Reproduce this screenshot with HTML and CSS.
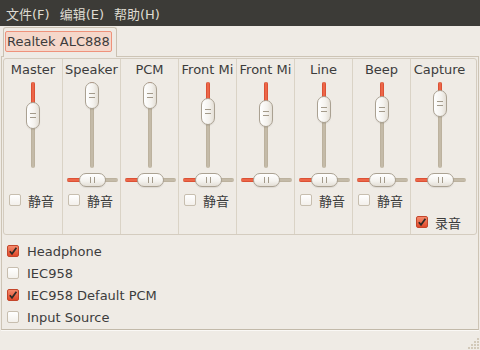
FILE: index.html
```html
<!DOCTYPE html>
<html>
<head>
    <title>Mixer</title>
    <link rel="stylesheet" href="styles.css">
</head>
<body>
    <div class="menubar">
        <span>文件(F)</span>
        <span>编辑(E)</span>
        <span>帮助(H)</span>
    </div>

    <div class="notebook">
        <div class="tabs">
            <div class="tab"><span class="tab-label">Realtek ALC888</span></div>
        </div>
        <div class="page">
            <div class="frame">
                <!-- one column per mixer track -->
                <div class="channel">
                    <div class="ch-name">Master</div>
                    <div class="vscale"><div class="trough"></div><div class="fill" style="height:24px"></div><div class="thumb" style="top:20px"></div></div>
                    <div class="hscale empty"></div>
                    <div class="check"><span class="box"></span>静音</div>
                </div>
                <div class="channel">
                    <div class="ch-name">Speaker</div>
                    <div class="vscale"><div class="trough"></div><div class="fill" style="height:4px"></div><div class="thumb" style="top:0px"></div></div>
                    <div class="hscale"><div class="trough"></div><div class="fill" style="width:14px"></div><div class="thumb" style="left:12px"></div></div>
                    <div class="check"><span class="box"></span>静音</div>
                </div>
                <div class="channel">
                    <div class="ch-name">PCM</div>
                    <div class="vscale"><div class="trough"></div><div class="fill" style="height:4px"></div><div class="thumb" style="top:0px"></div></div>
                    <div class="hscale"><div class="trough"></div><div class="fill" style="width:14px"></div><div class="thumb" style="left:12px"></div></div>
                    <div class="check"></div>
                </div>
                <div class="channel">
                    <div class="ch-name">Front Mi</div>
                    <div class="vscale"><div class="trough"></div><div class="fill" style="height:20px"></div><div class="thumb" style="top:16px"></div></div>
                    <div class="hscale"><div class="trough"></div><div class="fill" style="width:14px"></div><div class="thumb" style="left:12px"></div></div>
                    <div class="check"><span class="box"></span>静音</div>
                </div>
                <div class="channel">
                    <div class="ch-name">Front Mi</div>
                    <div class="vscale"><div class="trough"></div><div class="fill" style="height:22px"></div><div class="thumb" style="top:18px"></div></div>
                    <div class="hscale"><div class="trough"></div><div class="fill" style="width:14px"></div><div class="thumb" style="left:12px"></div></div>
                    <div class="check"></div>
                </div>
                <div class="channel">
                    <div class="ch-name">Line</div>
                    <div class="vscale"><div class="trough"></div><div class="fill" style="height:18px"></div><div class="thumb" style="top:14px"></div></div>
                    <div class="hscale"><div class="trough"></div><div class="fill" style="width:14px"></div><div class="thumb" style="left:12px"></div></div>
                    <div class="check"><span class="box"></span>静音</div>
                </div>
                <div class="channel">
                    <div class="ch-name">Beep</div>
                    <div class="vscale"><div class="trough"></div><div class="fill" style="height:18px"></div><div class="thumb" style="top:14px"></div></div>
                    <div class="hscale"><div class="trough"></div><div class="fill" style="width:14px"></div><div class="thumb" style="left:12px"></div></div>
                    <div class="check"><span class="box"></span>静音</div>
                </div>
                <div class="channel">
                    <div class="ch-name">Capture</div>
                    <div class="vscale"><div class="trough"></div><div class="fill" style="height:12px"></div><div class="thumb" style="top:8px"></div></div>
                    <div class="hscale"><div class="trough"></div><div class="fill" style="width:14px"></div><div class="thumb" style="left:12px"></div></div>
                    <div class="check"></div>
                    <div class="check capture"><span class="box on"><svg width="10" height="10" viewBox="0 0 10 10"><path d="M1.8 5.2 L4 7.8 L8.4 1.8" fill="none" stroke="#2e2a26" stroke-width="1.7"/></svg></span>录音</div>
                </div>
            </div>

            <div class="switches">
                <div class="switch"><span class="box on"><svg width="10" height="10" viewBox="0 0 10 10"><path d="M1.8 5.2 L4 7.8 L8.4 1.8" fill="none" stroke="#2e2a26" stroke-width="1.7"/></svg></span>Headphone</div>
                <div class="switch"><span class="box"></span>IEC958</div>
                <div class="switch"><span class="box on"><svg width="10" height="10" viewBox="0 0 10 10"><path d="M1.8 5.2 L4 7.8 L8.4 1.8" fill="none" stroke="#2e2a26" stroke-width="1.7"/></svg></span>IEC958 Default PCM</div>
                <div class="switch"><span class="box"></span>Input Source</div>
            </div>
        </div>
    </div>

    <div class="statusbar">
        <svg class="grip" width="11" height="11" viewBox="0 0 11 11">
            <g fill="#d2c9b9">
                <rect x="9" y="0" width="2" height="2"/>
                <rect x="6" y="3" width="2" height="2"/><rect x="9" y="3" width="2" height="2"/>
                <rect x="3" y="6" width="2" height="2"/><rect x="6" y="6" width="2" height="2"/><rect x="9" y="6" width="2" height="2"/>
                <rect x="0" y="9" width="2" height="2"/><rect x="3" y="9" width="2" height="2"/><rect x="6" y="9" width="2" height="2"/><rect x="9" y="9" width="2" height="2"/>
            </g>
        </svg>
    </div>
</body>
</html>
```

FILE: styles.css
```css
/* Ubuntu Ambiance look */
body {
    margin: 0;
    height: 350px;
    overflow: hidden;
    background-color: #efebe5;
    color: #3c3c3c;
    font-family: "DejaVu Sans", "Noto Sans CJK SC", sans-serif;
    font-size: 13px;
}

.menubar {
    height: 26px;
    background-color: #3c3b37;
    color: #dfdbd2;
    display: flex;
    align-items: center;
    padding-left: 1px;
}
.menubar span {
    padding: 0 5px;
}

.notebook {
    padding: 1px 1px 0 1px;
}
.tabs {
    display: flex;
    padding-left: 2px;
}
.tab {
    position: relative;
    z-index: 1;
    height: 30px;
    margin-bottom: -1px;
    box-sizing: border-box;
    padding: 3px 4px 0 1px;
    background-color: #efebe5;
    border: 1px solid #cac1b2;
    border-bottom: none;
    border-radius: 3px 3px 0 0;
}
.tab-label {
    display: inline-block;
    line-height: 19px;
    padding: 0 1px;
    background-color: #f5d7ca;
    border: 1px solid #ef927b;
    border-radius: 2px;
}

.page {
    height: 274px;
    box-sizing: border-box;
    padding: 1px;
    border: 1px solid #cdc4b5;
    border-bottom-color: #c2b9a9;
    box-shadow: 0 1px 0 #faf8f5;
}

.frame {
    display: flex;
    height: 177px;
    box-sizing: border-box;
    border: 1px solid #d4ccbf;
    border-radius: 3px;
}
.channel {
    width: 58px;
    box-sizing: border-box;
}
.channel + .channel {
    border-left: 1px solid #dad3c6;
}
.ch-name {
    margin: 3px 1px 0 1px;
    line-height: 16px;
    text-align: center;
    white-space: nowrap;
    overflow: hidden;
}

/* sliders */
.vscale {
    position: relative;
    width: 14px;
    height: 86px;
    margin: 4px auto 0;
}
.vscale .trough,
.vscale .fill {
    position: absolute;
    left: 5px;
    width: 4px;
    top: 0;
    border-radius: 2px;
}
.vscale .trough {
    bottom: 0;
}
.trough {
    background: linear-gradient(to right, #b8ad99, #c8bfad 50%, #b8ad99);
}
.vscale .fill {
    background: linear-gradient(to right, #d4462b, #f47152 50%, #d4462b);
}
.hscale .fill {
    background: linear-gradient(#d4462b, #f47152 50%, #d4462b);
}
.hscale .trough {
    background: linear-gradient(#b8ad99, #c8bfad 50%, #b8ad99);
}
.thumb {
    position: absolute;
    box-sizing: border-box;
    border: 1px solid #aaa192;
    border-radius: 7px;
    box-shadow: 0 1px 1px rgba(0, 0, 0, 0.08);
}
.vscale .thumb {
    left: 0;
    width: 14px;
    height: 27px;
    background: linear-gradient(to right, #ffffff, #f4f2ee 60%, #e4dfd6);
}
.vscale .thumb::before {
    content: "";
    position: absolute;
    left: 3px;
    top: 10px;
    width: 6px;
    height: 3px;
    border-top: 1px solid #a39a8a;
    border-bottom: 1px solid #a39a8a;
}
.hscale {
    position: relative;
    width: 51px;
    height: 14px;
    margin: 5px 0 0 4px;
}
.hscale.empty {
    visibility: hidden;
}
.hscale .trough,
.hscale .fill {
    position: absolute;
    top: 5px;
    height: 4px;
    left: 0;
    border-radius: 2px;
}
.hscale .trough {
    right: 0;
}
.hscale .thumb {
    top: 0;
    width: 27px;
    height: 14px;
    background: linear-gradient(#ffffff, #f4f2ee 60%, #e4dfd6);
}
.hscale .thumb::before {
    content: "";
    position: absolute;
    left: 10px;
    top: 3px;
    width: 3px;
    height: 6px;
    border-left: 1px solid #a39a8a;
    border-right: 1px solid #a39a8a;
}

/* check boxes */
.check {
    display: flex;
    align-items: center;
    gap: 7px;
    height: 14px;
    margin-top: 6px;
    padding-left: 5px;
}
.check.capture {
    margin-top: 8px;
}
.box {
    display: inline-flex;
    align-items: center;
    justify-content: center;
    width: 12px;
    height: 12px;
    box-sizing: border-box;
    background: linear-gradient(#ffffff, #f3f0eb);
    border: 1px solid #c7beaf;
    border-radius: 2px;
}
.box.on {
    background: linear-gradient(#f58a6c, #e0492a);
    border-color: #c4462b;
}

.switches {
    padding: 5px 0 0 4px;
}
.switch {
    display: flex;
    align-items: center;
    gap: 8px;
    height: 22px;
}

.statusbar {
    display: flex;
    justify-content: flex-end;
    align-items: flex-end;
    height: 19px;
    padding-right: 1px;
}
```
